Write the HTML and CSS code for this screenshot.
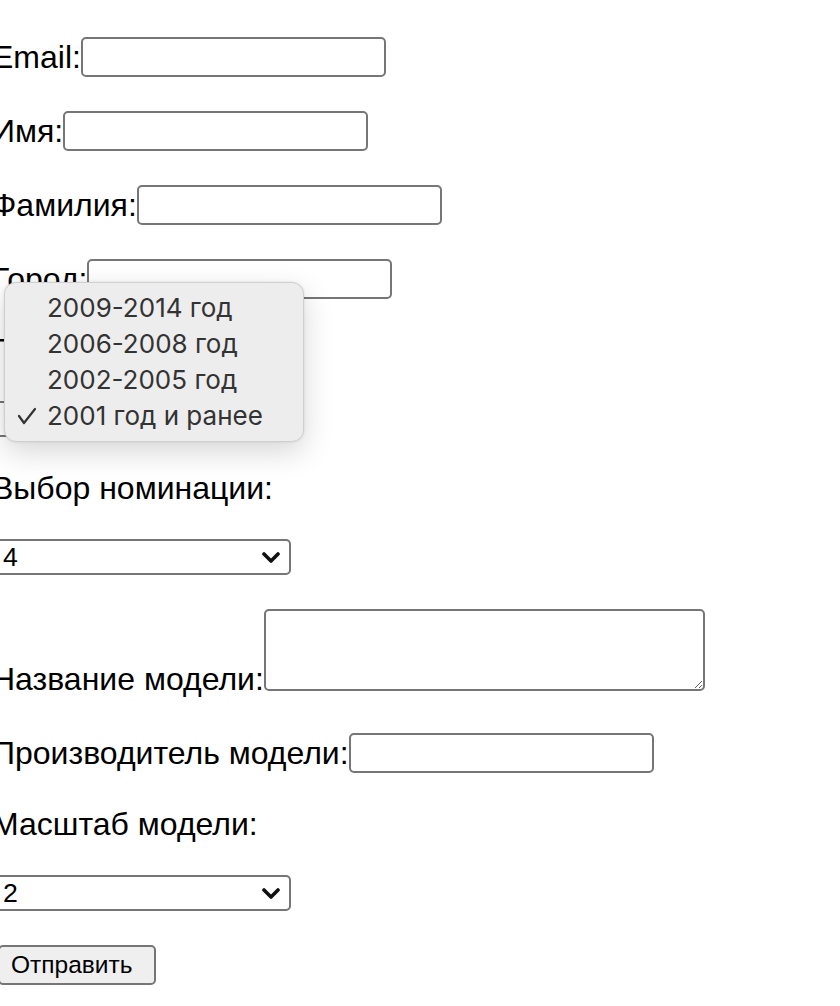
FILE: index.html
```html
<!DOCTYPE html>
<html lang="ru">
<head>
<meta charset="utf-8">
<title>Форма</title>
<link rel="stylesheet" href="styles.css">
</head>
<body>
<form class="form">
  <div class="row"><span class="lbl">Email:</span><input class="field" type="text"></div>
  <div class="row"><span class="lbl">Имя:</span><input class="field" type="text"></div>
  <div class="row"><span class="lbl">Фамилия:</span><input class="field" type="text"></div>
  <div class="row"><span class="lbl">Город:</span><input class="field" type="text"></div>
  <div class="label-row">Год выпуска модели:</div>
  <div class="select-row">
    <span class="select-wrap">
      <span class="select-box">2001 год и ранее</span>
      <svg class="chev" width="18" height="12" viewBox="0 0 18 12"><polyline points="2,2 9,9 16,2" fill="none" stroke="#111" stroke-width="3.6" stroke-linecap="round" stroke-linejoin="round"/></svg>
    </span>
  </div>
  <div class="label-row">Выбор номинации:</div>
  <div class="select-row">
    <span class="select-wrap">
      <span class="select-box">4</span>
      <svg class="chev" width="18" height="12" viewBox="0 0 18 12"><polyline points="2,2 9,9 16,2" fill="none" stroke="#111" stroke-width="3.6" stroke-linecap="round" stroke-linejoin="round"/></svg>
    </span>
  </div>
  <div class="row textarea-row"><span class="lbl">Название модели:</span><textarea class="area"></textarea></div>
  <div class="row"><span class="lbl">Производитель модели:</span><input class="field" type="text"></div>
  <div class="label-row">Масштаб модели:</div>
  <div class="select-row">
    <span class="select-wrap">
      <span class="select-box">2</span>
      <svg class="chev" width="18" height="12" viewBox="0 0 18 12"><polyline points="2,2 9,9 16,2" fill="none" stroke="#111" stroke-width="3.6" stroke-linecap="round" stroke-linejoin="round"/></svg>
    </span>
  </div>
  <div class="button-row"><button class="btn" type="button">Отправить</button></div>

  <div class="popup">
    <div class="opt">2009-2014 год</div>
    <div class="opt">2006-2008 год</div>
    <div class="opt">2002-2005 год</div>
    <div class="opt"><svg class="check" width="20" height="18" viewBox="0 0 20 18"><polyline points="2,9 7,16 18,2" fill="none" stroke="#333" stroke-width="2.2" stroke-linecap="round" stroke-linejoin="round"/></svg>2001 год и ранее</div>
  </div>
</form>
</body>
</html>
```
FILE: styles.css
```css
html, body {
  margin: 0;
  padding: 0;
  background: #ffffff;
  overflow: hidden;
}

.form {
  position: relative;
  margin-left: -8px;
  padding-top: 4px;
  font-family: "Liberation Sans", Arial, sans-serif;
  font-size: 32px;
  color: #000;
}

.row {
  display: flex;
  align-items: center;
  height: 42px;
  margin: 32px 0;
  line-height: 42px;
}

.lbl {
  white-space: nowrap;
}

.field {
  box-sizing: border-box;
  width: 305px;
  height: 40px;
  margin: 0;
  padding: 0 6px;
  border: 2px solid #767676;
  border-radius: 5px;
  background: #fff;
  font-family: "Liberation Sans", Arial, sans-serif;
  font-size: 26px;
}

.label-row {
  height: 37px;
  line-height: 37px;
  margin: 32px 0;
  white-space: nowrap;
}

.select-row {
  height: 37px;
  margin: 32px 0;
  display: flex;
  align-items: flex-start;
}

.select-wrap {
  position: relative;
  display: block;
  box-sizing: border-box;
  width: 300px;
  height: 36px;
  margin-left: -1px;
  border: 2px solid #767676;
  border-radius: 5px;
  background: #fff;
}

.select-box {
  display: block;
  padding-left: 10px;
  font-size: 26.67px;
  line-height: 32px;
  white-space: nowrap;
  overflow: hidden;
}

.chev {
  position: absolute;
  right: 9px;
  top: 11px;
}

.textarea-row {
  height: 92px;
  align-items: flex-end;
  line-height: 37px;
}

.textarea-row .lbl {
  margin-bottom: 2px;
}

.area {
  box-sizing: border-box;
  width: 441px;
  height: 82px;
  margin: 0 0 9px 0;
  padding: 4px;
  border: 2px solid #767676;
  border-radius: 5px;
  resize: both;
  font-family: "Liberation Mono", monospace;
  font-size: 26px;
}

.button-row {
  height: 42px;
  margin: 32px 0;
  display: flex;
  align-items: flex-start;
  padding-top: 1px;
}

.btn {
  box-sizing: border-box;
  width: 158px;
  height: 40px;
  margin: 0 0 0 6px;
  padding: 0 0 0 11px;
  text-align: left;
  border: 2px solid #767676;
  border-radius: 5px;
  background: #efefef;
  color: #000;
  font-family: "Liberation Sans", Arial, sans-serif;
  font-size: 24.5px;
  line-height: 36px;
}

.popup {
  position: absolute;
  left: 12px;
  top: 282px;
  box-sizing: border-box;
  width: 300px;
  height: 160px;
  padding-top: 7px;
  background: #ededed;
  border: 1px solid #cfcfcf;
  border-radius: 12px;
  box-shadow: 0 10px 30px rgba(0, 0, 0, 0.16), 0 0 3px rgba(0, 0, 0, 0.1);
  font-family: Inter, "Noto Sans", sans-serif;
  font-size: 26px;
  color: #333;
}

.opt {
  position: relative;
  height: 36px;
  line-height: 36px;
  padding-left: 42px;
  white-space: nowrap;
}

.check {
  position: absolute;
  left: 12px;
  top: 9px;
}
```
